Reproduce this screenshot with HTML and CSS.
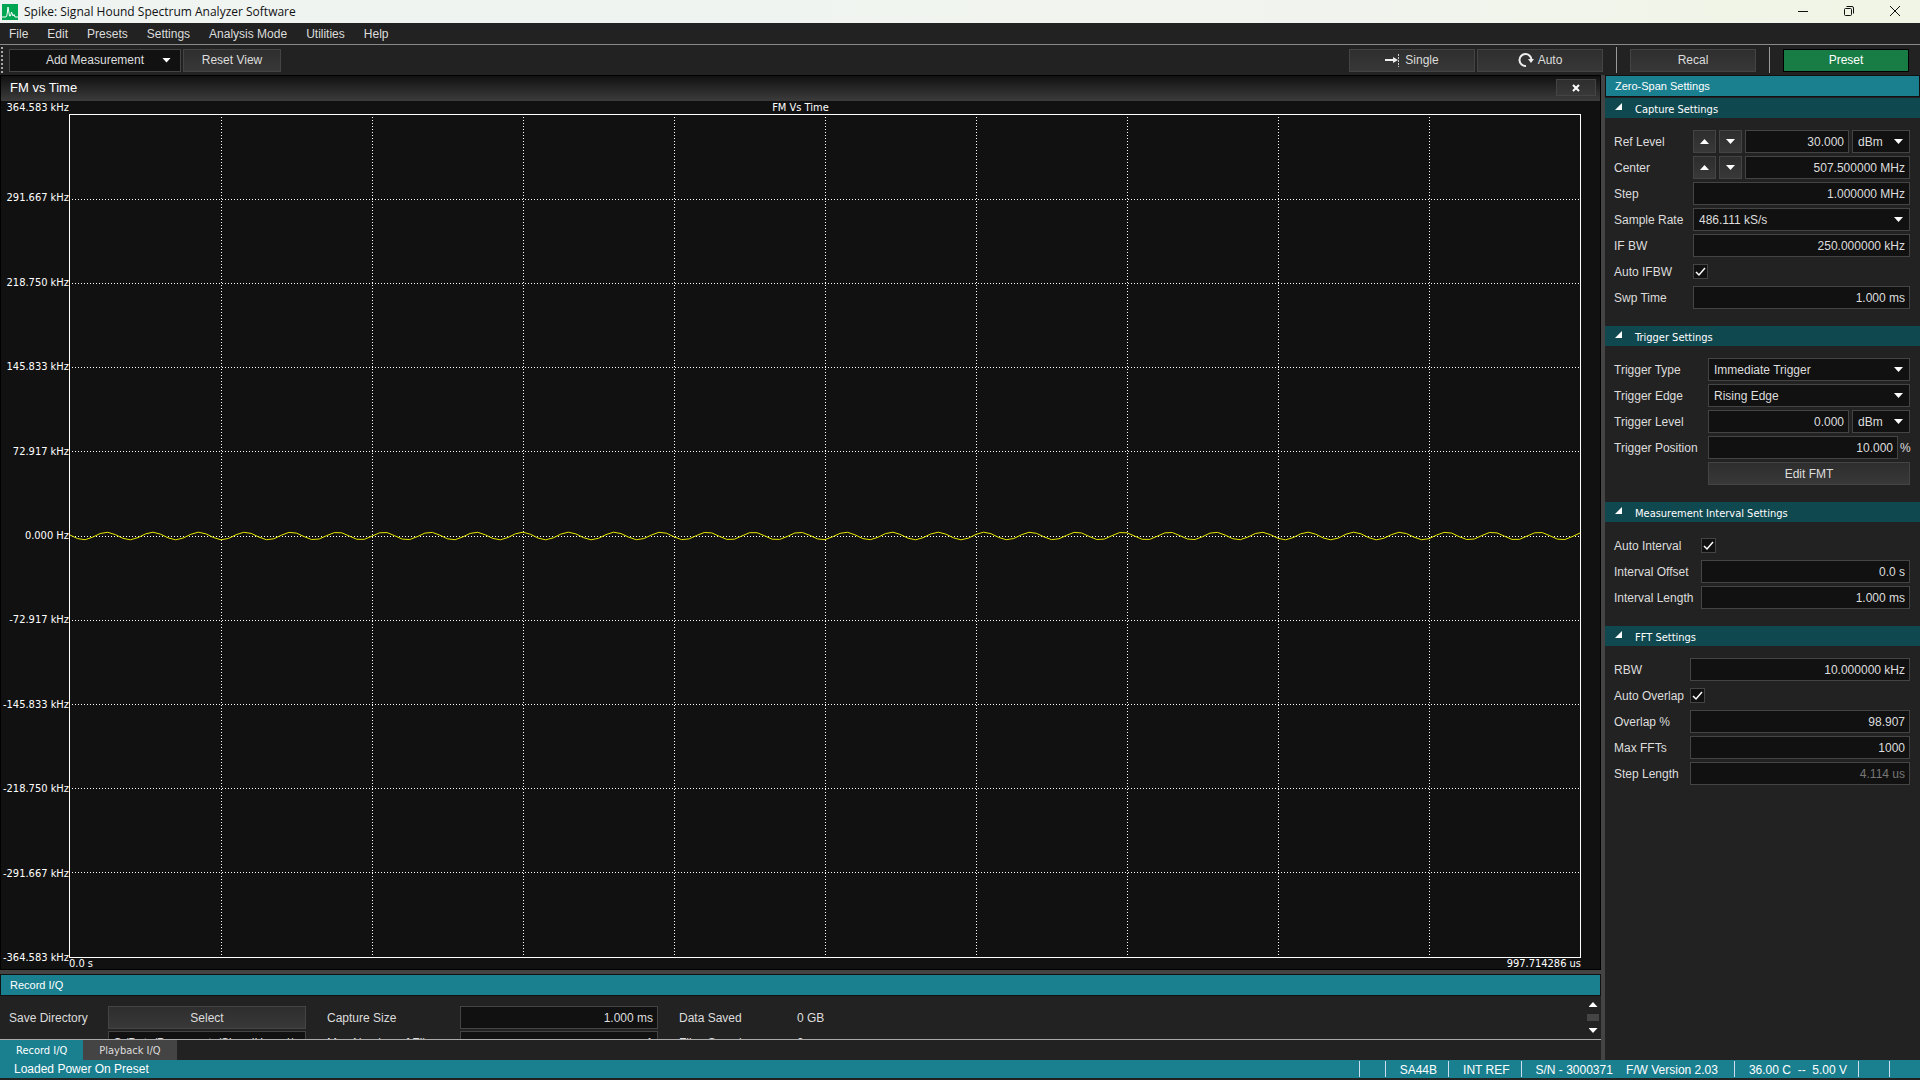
FILE: index.html
```html
<!DOCTYPE html>
<html lang="en">
<head>
  <meta charset="UTF-8">
  <meta name="viewport" content="width=device-width, initial-scale=1.0">
  <title>Spike: Signal Hound Spectrum Analyzer Software</title>
  <link rel="stylesheet" href="styles.css">
</head>
<body>

  <header class="titlebar">
    <svg class="logo" viewBox="0 0 16 16" width="16" height="16">
      <rect width="16" height="16" fill="#00a651"/>
      <path d="M0 13H4L5 11L6 3L7.5 12L8.5 12L9.5 8L11 12L12 10.5L13 13H16" fill="none" stroke="#fff" stroke-width="1"/>
    </svg>
    <h1>Spike: Signal Hound Spectrum Analyzer Software</h1>
    <div class="window-buttons">
      <button aria-label="Minimize"><svg viewBox="0 0 12 12" width="12" height="12"><path d="M1 6.5H11"/></svg></button>
      <button aria-label="Restore"><svg viewBox="0 0 12 12" width="12" height="12"><rect x="1.5" y="3.5" width="7" height="7" rx="1"/><path d="M3.5 1.5H9Q10.5 1.5 10.5 3V8.5"/></svg></button>
      <button aria-label="Close"><svg viewBox="0 0 12 12" width="12" height="12"><path d="M1 1L11 11M11 1L1 11"/></svg></button>
    </div>
  </header>

  <nav class="menubar">
    <a href="#">File</a>
    <a href="#">Edit</a>
    <a href="#">Presets</a>
    <a href="#">Settings</a>
    <a href="#">Analysis Mode</a>
    <a href="#">Utilities</a>
    <a href="#">Help</a>
  </nav>

  <div class="toolbar">
    <span class="grip"></span>
    <button class="btn add-btn">Add Measurement <span class="arrow down"></span></button>
    <button class="btn reset-btn">Reset View</button>
    <div class="toolbar-right">
      <button class="btn tool-btn">
        <svg viewBox="0 0 16 16" width="16" height="16"><path d="M0 8H10" stroke="#eee" stroke-width="2"/><path d="M8 5L13 8L8 11Z" fill="#eee"/><path d="M13.500 2V15" stroke="#ccc" stroke-width="1" stroke-dasharray="2 1"/></svg>
        Single
      </button>
      <button class="btn tool-btn">
        <svg viewBox="0 0 16 16" width="16" height="16"><path d="M8 14A6 6 0 1 1 13.500 8" fill="none" stroke="#eee" stroke-width="2"/><path d="M10 7H16L13 11Z" fill="#eee"/></svg>
        Auto
      </button>
      <span class="sep"></span>
      <button class="btn tool-btn">Recal</button>
      <span class="sep"></span>
      <button class="btn tool-btn preset">Preset</button>
    </div>
  </div>

  <div class="workspace">
    <main class="left">
      <section class="view">
        <div class="view-title">
          <h2>FM vs Time</h2>
          <button class="btn close-view" aria-label="Close view"><svg viewBox="0 0 8 8" width="8" height="8"><path d="M1 1L7 7M7 1L1 7" stroke="#fff" stroke-width="2"/></svg></button>
        </div>
        <div class="plot">
          <div class="plot-title">FM Vs Time</div>
          <div class="y-labels">
            <span>364.583 kHz</span>
            <span>291.667 kHz</span>
            <span>218.750 kHz</span>
            <span>145.833 kHz</span>
            <span>72.917 kHz</span>
            <span>0.000 Hz</span>
            <span>-72.917 kHz</span>
            <span>-145.833 kHz</span>
            <span>-218.750 kHz</span>
            <span>-291.667 kHz</span>
            <span>-364.583 kHz</span>
          </div>
          <div class="graph">
            <svg class="grid-lines" id="grid"></svg>
            <svg class="trace" viewBox="0 0 1510 842" preserveAspectRatio="none"><polyline id="trace" points=""/></svg>
          </div>
          <div class="x-labels"><span>0.0 s</span><span>997.714286 us</span></div>
        </div>
      </section>

      <section class="dock">
        <h2 class="dock-title">Record I/Q</h2>
        <div class="dock-body">
          <div class="record-form">
            <span>Save Directory</span>
            <button class="btn">Select</button>
            <label for="capture-size">Capture Size</label>
            <input class="field" id="capture-size" value="1.000 ms">
            <span>Data Saved</span>
            <span>0 GB</span>
            <span></span>
            <input class="field path" aria-label="Directory" value="C:/Data/Documents/SignalHound/">
            <label for="max-files">Max Number of Files</label>
            <input class="field" id="max-files" value="1">
            <span>Files Saved</span>
            <span>0</span>
          </div>
          <div class="scrollbar">
            <span class="arrow up"></span>
            <span class="thumb"></span>
            <span class="arrow down"></span>
          </div>
        </div>
        <div class="tabs">
          <button class="tab active">Record I/Q</button>
          <button class="tab">Playback I/Q</button>
        </div>
      </section>
    </main>

    <aside class="panel">
      <h2 class="dock-title">Zero-Span Settings</h2>

      <section class="group capture">
        <h3>Capture Settings</h3>
        <div class="row">
          <label for="ref-level">Ref Level</label>
          <button class="btn step" aria-label="Ref level up"><span class="arrow up"></span></button>
          <button class="btn step" aria-label="Ref level down"><span class="arrow down"></span></button>
          <input class="field" id="ref-level" value="30.000">
          <select class="field unit" aria-label="Ref level unit"><option>dBm</option></select>
        </div>
        <div class="row">
          <label for="center">Center</label>
          <button class="btn step" aria-label="Center up"><span class="arrow up"></span></button>
          <button class="btn step" aria-label="Center down"><span class="arrow down"></span></button>
          <input class="field" id="center" value="507.500000 MHz">
        </div>
        <div class="row">
          <label for="step">Step</label>
          <input class="field" id="step" value="1.000000 MHz">
        </div>
        <div class="row">
          <label for="sample-rate">Sample Rate</label>
          <select class="field" id="sample-rate"><option>486.111 kS/s</option></select>
        </div>
        <div class="row">
          <label for="if-bw">IF BW</label>
          <input class="field" id="if-bw" value="250.000000 kHz">
        </div>
        <div class="row">
          <label for="auto-ifbw">Auto IFBW</label>
          <input type="checkbox" id="auto-ifbw" checked>
        </div>
        <div class="row">
          <label for="swp-time">Swp Time</label>
          <input class="field" id="swp-time" value="1.000 ms">
        </div>
      </section>

      <section class="group trigger">
        <h3>Trigger Settings</h3>
        <div class="row">
          <label for="trigger-type">Trigger Type</label>
          <select class="field" id="trigger-type"><option>Immediate Trigger</option></select>
        </div>
        <div class="row">
          <label for="trigger-edge">Trigger Edge</label>
          <select class="field" id="trigger-edge"><option>Rising Edge</option></select>
        </div>
        <div class="row">
          <label for="trigger-level">Trigger Level</label>
          <input class="field" id="trigger-level" value="0.000">
          <select class="field unit" aria-label="Trigger level unit"><option>dBm</option></select>
        </div>
        <div class="row">
          <label for="trigger-pos">Trigger Position</label>
          <input class="field" id="trigger-pos" value="10.000">
          <span class="suffix">%</span>
        </div>
        <div class="row">
          <button class="btn wide">Edit FMT</button>
        </div>
      </section>

      <section class="group interval">
        <h3>Measurement Interval Settings</h3>
        <div class="row">
          <label for="auto-interval">Auto Interval</label>
          <input type="checkbox" id="auto-interval" checked>
        </div>
        <div class="row">
          <label for="interval-offset">Interval Offset</label>
          <input class="field" id="interval-offset" value="0.0 s">
        </div>
        <div class="row">
          <label for="interval-length">Interval Length</label>
          <input class="field" id="interval-length" value="1.000 ms">
        </div>
      </section>

      <section class="group fft">
        <h3>FFT Settings</h3>
        <div class="row">
          <label for="rbw">RBW</label>
          <input class="field" id="rbw" value="10.000000 kHz">
        </div>
        <div class="row">
          <label for="auto-overlap">Auto Overlap</label>
          <input type="checkbox" id="auto-overlap" checked>
        </div>
        <div class="row">
          <label for="overlap">Overlap %</label>
          <input class="field" id="overlap" value="98.907">
        </div>
        <div class="row">
          <label for="max-ffts">Max FFTs</label>
          <input class="field" id="max-ffts" value="1000">
        </div>
        <div class="row">
          <label for="step-length">Step Length</label>
          <input class="field" id="step-length" value="4.114 us" disabled>
        </div>
      </section>
    </aside>
  </div>

  <footer class="statusbar">
    <span class="message">Loaded Power On Preset</span>
    <span class="cell blank"></span>
    <span class="cell">SA44B</span>
    <span class="cell">INT REF</span>
    <span class="cell device"><span>S/N - 3000371</span><span>F/W Version 2.03</span></span>
    <span class="cell power">36.00 C&nbsp; --&nbsp; 5.00 V</span>
    <span class="cell blank"></span>
    <span class="cell blank"></span>
  </footer>

  <script src="script.js"></script>
</body>
</html>
```
FILE: styles.css
```css
* {
  box-sizing: border-box;
}

body {
  margin: 0;
  height: 100vh;
  display: flex;
  flex-direction: column;
  overflow: hidden;
  background-color: #222;
  color: #ddd;
  font-family: "Liberation Sans", Arial, sans-serif;
  font-size: 12px;
  line-height: 16px;
}

h1, h2, h3 {
  margin: 0;
  font-weight: normal;
}

button, input, select {
  margin: 0;
  font: inherit;
  color: inherit;
}

/* window title */
.titlebar {
  flex: none;
  display: flex;
  align-items: center;
  height: 23px;
  padding-left: 2px;
  background: linear-gradient(to right, #eff4f2, #f1f4ee 70%, #f0f5e5);
  color: #111;
}

.titlebar h1 {
  margin-left: 6px;
  font-family: "Open Sans", sans-serif;
  font-size: 12px;
}

.window-buttons {
  display: flex;
  margin-left: auto;
  padding-right: 2px;
}

.window-buttons button {
  display: flex;
  align-items: center;
  justify-content: center;
  width: 46px;
  height: 20px;
  padding: 0 0 2px;
  border: none;
  background: none;
}

.window-buttons svg {
  fill: none;
  stroke: #111;
}

.menubar {
  flex: none;
  display: flex;
  gap: 19px;
  height: 22px;
  padding: 3px 9px;
  border-bottom: 1px solid #8a8a8a;
}

.menubar a {
  color: #ddd;
  text-decoration: none;
}

/* buttons and fields */
.btn {
  display: flex;
  align-items: center;
  justify-content: center;
  height: 23px;
  padding: 0;
  border: 1px solid #444;
  background: linear-gradient(#2e2e2e, #383838);
  color: #ddd;
}

.arrow {
  width: 9px;
  height: 5px;
  background-color: #fff;
}

.arrow.down {
  clip-path: polygon(0 0, 100% 0, 50% 100%);
}

.arrow.up {
  clip-path: polygon(0 100%, 100% 100%, 50% 0);
}

.field {
  flex: 1;
  min-width: 0;
  height: 23px;
  padding: 0 4px;
  border: 1px solid #444;
  border-radius: 0;
  background-color: #111;
  text-align: right;
}

.field:disabled {
  color: #777;
}

select.field {
  appearance: none;
  padding: 0 5px;
  text-align: left;
  background: #111 url("data:image/svg+xml,%3Csvg xmlns='http://www.w3.org/2000/svg' width='9' height='5'%3E%3Cpath d='M0 0H9L4.5 5Z' fill='white'/%3E%3C/svg%3E") no-repeat right 6px center;
}

.field.unit {
  flex: none;
  width: 58px;
  margin-left: 3px;
}

/* toolbar */
.toolbar {
  flex: none;
  display: flex;
  align-items: center;
  height: 30px;
  padding-right: 11px;
}

.grip {
  width: 2px;
  height: 26px;
  margin: 0 6px 0 1px;
  background: repeating-linear-gradient(#aaa 0 2px, transparent 2px 4px);
}

.add-btn {
  justify-content: flex-end;
  gap: 18px;
  width: 172px;
  padding-right: 9px;
  background: #111;
}

.reset-btn {
  width: 98px;
  margin-left: 2px;
}

.toolbar-right {
  display: flex;
  align-items: center;
  gap: 2px;
  margin-left: auto;
}

.tool-btn {
  gap: 4px;
  width: 126px;
}

.tool-btn.preset {
  border-color: #000;
  background: #187d45;
  color: #fff;
}

.sep {
  width: 1px;
  height: 26px;
  margin: 0 11px;
  background-color: #999;
}

/* main area */
.workspace {
  flex: 1;
  min-height: 0;
  display: flex;
}

.left {
  flex: 1;
  min-width: 0;
  display: flex;
  flex-direction: column;
}

.view {
  flex: 1;
  min-height: 0;
  display: flex;
  flex-direction: column;
  border: 1px solid #000;
  background-color: #111;
}

.view-title {
  flex: none;
  display: flex;
  align-items: center;
  justify-content: space-between;
  height: 25px;
  padding: 0 4px 2px 9px;
  background: linear-gradient(#111, #3c3c3c);
  color: #fff;
}

.view-title h2 {
  font-size: 13px;
}

.close-view {
  width: 40px;
  height: 17px;
}

.plot {
  flex: 1;
  min-height: 0;
  display: grid;
  grid-template: 13px 1fr 13px / 68px 1fr;
  padding-right: 19px;
  color: #fff;
  font-family: "DejaVu Sans Condensed", "DejaVu Sans", sans-serif;
  font-size: 11px;
  line-height: 14px;
  white-space: nowrap;
}

.plot-title {
  grid-column: 1 / 3;
  padding-left: 19px;
  text-align: center;
}

.y-labels {
  display: flex;
  flex-direction: column;
  justify-content: space-between;
  align-items: flex-end;
  margin: -7px 0;
}

/* top label sits above the frame */
.y-labels span:first-child {
  margin: -6px 0 6px;
}

.graph {
  display: grid;
  border: 1px solid #fff;
}

.grid-lines, .trace {
  grid-area: 1 / 1;
  width: 100%;
  height: 100%;
}

.grid-lines line {
  stroke: #fff;
  stroke-dasharray: 1 2;
  shape-rendering: crispEdges;
}

.trace polyline {
  fill: none;
  stroke: #e6e600;
}

.x-labels {
  grid-column: 2;
  display: flex;
  justify-content: space-between;
  line-height: 12px;
}

/* record dock */
.dock {
  flex: none;
  border-top: 4px solid #444;
}

.dock-title {
  height: 22px;
  padding: 2px 9px;
  border: 1px solid #111;
  background-color: #1a8090;
  color: #fff;
  font-size: 11px;
}

.dock-body {
  display: flex;
  justify-content: space-between;
  height: 44px;
  overflow: hidden;
  border-bottom: 1px solid #aaa;
}

.record-form {
  display: grid;
  grid-template-columns: 78px 198px 112px 198px 97px 80px;
  grid-auto-rows: 23px;
  column-gap: 21px;
  row-gap: 2px;
  align-items: center;
  padding: 10px 0 0 9px;
  white-space: nowrap;
}

.field.path {
  text-align: left;
}

.scrollbar {
  display: flex;
  flex-direction: column;
  justify-content: space-between;
  align-items: center;
  width: 12px;
  margin-right: 2px;
  padding: 6px 0;
}

.thumb {
  width: 12px;
  height: 7px;
  background-color: #444;
}

.tabs {
  display: flex;
  height: 20px;
}

.tab {
  padding: 1px 16px 0;
  border: none;
  background-color: #444;
  font-family: "DejaVu Sans Condensed", "DejaVu Sans", sans-serif;
  font-size: 11px;
}

.tab.active {
  background-color: #1a8090;
  color: #fff;
}

/* settings panel */
.panel {
  flex: none;
  width: 319px;
  border-left: 4px solid #444;
}

.panel .dock-title {
  margin-bottom: 1px;
}

.group h3 {
  display: flex;
  align-items: center;
  gap: 13px;
  height: 20px;
  padding: 3px 10px 0;
  background-color: #104850;
  color: #fff;
  font-family: "DejaVu Sans Condensed", "DejaVu Sans", sans-serif;
  font-size: 11px;
}

.group h3::before {
  content: "";
  width: 7px;
  height: 7px;
  margin-bottom: 6px;
  background-color: #fff;
  clip-path: polygon(100% 0, 100% 100%, 0 100%);
}

.group {
  padding-bottom: 14px;
}

.row {
  display: flex;
  align-items: center;
  height: 23px;
  margin: 0 10px 3px 9px;
}

h3 + .row {
  margin-top: 12px;
}

.row label {
  flex: none;
  white-space: nowrap;
}

.capture label {
  width: 79px;
}

.trigger label {
  width: 94px;
}

.interval label {
  width: 87px;
}

.fft label {
  width: 76px;
}

.step {
  width: 23px;
  margin-right: 3px;
}

.suffix {
  width: 12px;
  padding-left: 2px;
}

.wide {
  flex: 1;
  margin-left: 94px;
}

input[type="checkbox"] {
  appearance: none;
  width: 15px;
  height: 15px;
  border: 1px solid #444;
  background: #111;
}

input[type="checkbox"]:checked {
  background: #111 url("data:image/svg+xml,%3Csvg xmlns='http://www.w3.org/2000/svg' width='13' height='13'%3E%3Cpath d='M2 7L5 10L11 3' fill='none' stroke='white' stroke-width='1.5'/%3E%3C/svg%3E") no-repeat center;
}

/* status bar */
.statusbar {
  flex: none;
  display: flex;
  align-items: center;
  height: 20px;
  padding-left: 14px;
  border-bottom: 2px solid #222;
  background-color: #1a8090;
  color: #fff;
  line-height: 18px;
}

.message {
  flex: 1;
}

.cell {
  height: 16px;
  padding: 0 11px 0 14px;
  border-left: 1px solid #cde;
}

.cell.blank {
  width: 26px;
  padding: 0;
}

.cell.blank:last-child,
.cell.power + .cell {
  width: 31px;
}

.cell.device {
  display: flex;
  gap: 13px;
  padding-right: 16px;
}
```
FILE: script.js
```js
const svgNS = 'http://www.w3.org/2000/svg';
const grid = document.getElementById('grid');

function addLine(x1, y1, x2, y2) {
  const line = document.createElementNS(svgNS, 'line');
  line.setAttribute('x1', x1);
  line.setAttribute('y1', y1);
  line.setAttribute('x2', x2);
  line.setAttribute('y2', y2);
  grid.appendChild(line);
}

// 10 x 10 divisions
for (let i = 1; i < 10; i++) {
  addLine(i * 10 + '%', 2, i * 10 + '%', '100%');
  addLine(2, i * 10 + '%', '100%', i * 10 + '%');
}

const steps = 200;
const points = [];
for (let i = 0; i <= steps; i++) {
  const x = i * 1510 / steps;
  const y = 421 - 3.8 * Math.sin((x - 25) * 2 * Math.PI / 46.2);
  points.push(x.toFixed(1) + ',' + y.toFixed(1));
}
document.getElementById('trace').setAttribute('points', points.join(' '));
```
